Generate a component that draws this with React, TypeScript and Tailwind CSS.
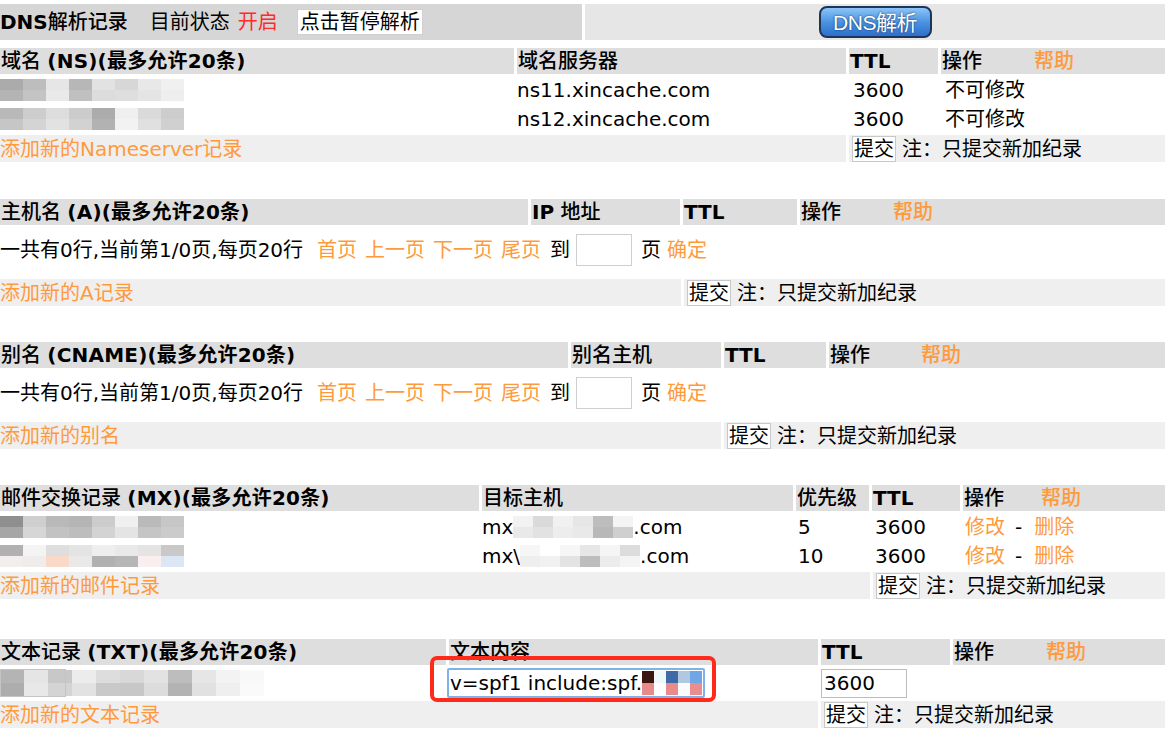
import React from 'react'

const font = "font-['DejaVu_Sans','Noto_Sans_CJK_SC',sans-serif]"

// blurred patches (top half / bottom half colours per column)
const nsBlur1 = [
  ['bg-[#ababab]', 'bg-[#b4b4b4]'],
  ['bg-[#bdbdbd]', 'bg-[#c4c4c4]'],
  ['bg-[#e6e6e6]', 'bg-[#e9e9e9]'],
  ['bg-[#b7b7b7]', 'bg-[#c0c0c0]'],
  ['bg-[#e2e2e2]', 'bg-[#dcdcdc]'],
  ['bg-[#d7d7d7]', 'bg-[#dedede]'],
  ['bg-[#e8e8e8]', 'bg-[#e4e4e4]'],
  ['bg-[#f0f0f0]', 'bg-[#eeeeee]'],
]
const nsBlur2 = [
  ['bg-[#b9b9b9]', 'bg-[#c6c6c6]'],
  ['bg-[#cdcdcd]', 'bg-[#d4d4d4]'],
  ['bg-[#dddddd]', 'bg-[#e2e2e2]'],
  ['bg-[#cccccc]', 'bg-[#d2d2d2]'],
  ['bg-[#acacac]', 'bg-[#b2b2b2]'],
  ['bg-[#efefef]', 'bg-[#f2f2f2]'],
  ['bg-[#dadada]', 'bg-[#e0e0e0]'],
  ['bg-[#cdcdcd]', 'bg-[#d0d0d0]'],
]
const mxBlur1 = [
  ['bg-[#8f8f8f]', 'bg-[#a6a6a6]'],
  ['bg-[#cfcfcf]', 'bg-[#d6d6d6]'],
  ['bg-[#b9b9b9]', 'bg-[#c2c2c2]'],
  ['bg-[#b5b5b5]', 'bg-[#bdbdbd]'],
  ['bg-[#cccccc]', 'bg-[#d3d3d3]'],
  ['bg-[#f0f0f0]', 'bg-[#e4e4e4]'],
  ['bg-[#bababa]', 'bg-[#c5c5c5]'],
  ['bg-[#c7c7c7]', 'bg-[#cbcbcb]'],
]
const mxBlur2 = [
  ['bg-[#b1b1b1]', 'bg-[#f3eeee]'],
  ['bg-[#f4f4f4]', 'bg-[#f1ecec]'],
  ['bg-[#dedede]', 'bg-[#fbd9c8]'],
  ['bg-[#e4e4e4]', 'bg-[#ebe8e8]'],
  ['bg-[#eeeeee]', 'bg-[#b1b1b1]'],
  ['bg-[#e9e9e9]', 'bg-[#b6b6b6]'],
  ['bg-[#e4e4e4]', 'bg-[#fbeeee]'],
  ['bg-[#c9c9c9]', 'bg-[#dde6f4]'],
]
const txtBlur = [
  ['bg-[#b4b4b4]', 'bg-[#adadad]'],
  ['bg-[#e5e5e5]', 'bg-[#e8e8e8]'],
  ['bg-[#c8c8c8]', 'bg-[#d4d4d4]'],
  ['bg-[#ececec]', 'bg-[#e2e2e2]'],
  ['bg-[#dddddd]', 'bg-[#c9c9c9]'],
  ['bg-[#d8d8d8]', 'bg-[#c7c7c7]'],
  ['bg-[#e2e2e2]', 'bg-[#dcdcdc]'],
  ['bg-[#bdbdbd]', 'bg-[#b3b3b3]'],
  ['bg-[#e6e6e6]', 'bg-[#e1e1e1]'],
  ['bg-[#f3f3f3]', 'bg-[#efefef]'],
  ['bg-[#f8f8f8]', 'bg-[#fafafa]'],
]
const mxHost1 = [
  ['bg-[#f2f2f2]', 'bg-[#e9e9e9]'],
  ['bg-[#dadada]', 'bg-[#e2e2e2]'],
  ['bg-[#f1f1f1]', 'bg-[#ededed]'],
  ['bg-[#e6e6e6]', 'bg-[#e9e9e9]'],
  ['bg-[#bdbdbd]', 'bg-[#b8b8b8]'],
  ['bg-[#f4f4f4]', 'bg-[#cfcfcf]'],
]
const mxHost2 = [
  ['bg-[#f6f6f6]', 'bg-[#eeeeee]'],
  ['bg-[#ffffff]', 'bg-[#f1f1f1]'],
  ['bg-[#f6f6f6]', 'bg-[#e3e3e3]'],
  ['bg-[#e6e6e6]', 'bg-[#bdbdbd]'],
  ['bg-[#f5f5f5]', 'bg-[#ececec]'],
  ['bg-[#dcdcdc]', 'bg-[#f4f4f4]'],
]
const spfBlur = [
  ['bg-[#3c1414]', 'bg-[#e98a8a]'],
  ['bg-[#eef8fb]', 'bg-[#ffffff]'],
  ['bg-[#3f6aa6]', 'bg-[#ea8a8a]'],
  ['bg-[#b0c8e0]', 'bg-[#fbfbfb]'],
  ['bg-[#6ea6e6]', 'bg-[#e98d8d]'],
]

function Blur({ cols, w = 'w-[23px]', h = 'h-[22px]' }: { cols: string[][]; w?: string; h?: string }) {
  return (
    <div className={`flex ${h}`}>
      {cols.map((c, i) => (
        <div key={i} className={`flex flex-col ${w}`}>
          <div className={`flex-1 ${c[0]}`} />
          <div className={`flex-1 ${c[1]}`} />
        </div>
      ))}
    </div>
  )
}

function SubmitCell() {
  return (
    <div className="flex items-center gap-[6px] pl-[3px]">
      <span className="bg-white border border-[#c8c8c8] px-[1px] h-[26px] flex items-center leading-none">提交</span>
      <span className="leading-none">注：只提交新加纪录</span>
    </div>
  )
}

function Help({ gap = 'ml-[52px]' }: { gap?: string }) {
  return <span className={`${gap} text-[#ff9a3c] font-medium`}>帮助</span>
}

function Orange({ children }: { children: React.ReactNode }) {
  return <span className="text-[#ff9a3c]">{children}</span>
}

function Pager() {
  return (
    <div className="h-[48px] pb-[4px] flex items-center leading-none">
      <span>一共有0行,当前第1/0页,每页20行</span>
      <span className="ml-[14px] text-[#ff9a3c] flex gap-[8px]">
        <span>首页</span>
        <span>上一页</span>
        <span>下一页</span>
        <span>尾页</span>
      </span>
      <span className="ml-[9px]">到</span>
      <span className="ml-[6px] w-[56px] h-[32px] bg-white border border-[#cfcfcf]" />
      <span className="ml-[9px]">页</span>
      <span className="ml-[6px] text-[#ff9a3c]">确定</span>
    </div>
  )
}

function Title({ first, code }: { first: string; code: string }) {
  return (
    <span className="whitespace-nowrap">
      <span className="font-medium">{first} </span>
      <span className="font-bold tracking-[0.2px]">({code})(最多允许20条)</span>
    </span>
  )
}

const hdr = 'h-[26px] bg-[#dedede] flex items-center pl-[1px] leading-none'
const add = 'h-[27px] bg-[#efefef] flex items-center leading-none'
const row = 'h-[26px] flex items-center leading-none'

export default function App() {
  return (
    <div className={`${font} text-[20px] text-black bg-white w-[1169px] h-[729px] overflow-hidden`}>
      <div className="w-[1165px] pt-[4px]">
        {/* top bar */}
        <div className="flex gap-[3px] h-[36px]">
          <div className="w-[582px] bg-[#d6d6d6] flex items-center leading-none">
            <span className="font-bold">DNS</span>
            <span className="font-medium">解析记录</span>
            <span className="ml-[22px]">目前状态</span>
            <span className="ml-[8px] text-[#ff2a2a]">开启</span>
            <span className="ml-[19px] bg-white border border-[#d0d0d0] h-[26px] px-[2px] flex items-center">点击暂停解析</span>
          </div>
          <div className="flex-1 bg-[#e6e6e6] flex items-center justify-center">
            <span className="h-[32px] w-[113px] rounded-[8px] border-2 border-[#1d3557] bg-gradient-to-b from-[#8cc4f6] via-[#4b93e2] to-[#2d6fcb] flex items-center justify-center text-white text-[21px] tracking-[-0.5px] font-['Liberation_Sans','Noto_Sans_CJK_SC',sans-serif] [text-shadow:0_0_2px_#0b2850] leading-none">
              DNS解析
            </span>
          </div>
        </div>

        {/* NS */}
        <div className="mt-[8px] flex flex-col gap-[3px]">
          <div className="flex gap-[3px]">
            <div className={`${hdr} w-[514px]`}><Title first="域名" code="NS" /></div>
            <div className={`${hdr} w-[329px] font-medium`}>域名服务器</div>
            <div className={`${hdr} w-[89px] font-bold`}>TTL</div>
            <div className={`${hdr} flex-1 font-medium`}>操作<Help /></div>
          </div>
          {[nsBlur1, nsBlur2].map((b, i) => (
            <div key={i} className="flex gap-[3px]">
              <div className={`${row} w-[514px]`}><Blur cols={b} /></div>
              <div className={`${row} w-[329px]`}>ns1{i + 1}.xincache.com</div>
              <div className={`${row} w-[89px] pl-[4px]`}>3600</div>
              <div className={`${row} flex-1 pl-[4px]`}>不可修改</div>
            </div>
          ))}
          <div className="flex gap-[3px]">
            <div className={`${add} w-[846px]`}><Orange>添加新的Nameserver记录</Orange></div>
            <div className={`${add} flex-1`}><SubmitCell /></div>
          </div>
        </div>

        {/* A */}
        <div className="mt-[37px] flex flex-col gap-[3px]">
          <div className="flex gap-[3px]">
            <div className={`${hdr} w-[528px]`}><Title first="主机名" code="A" /></div>
            <div className={`${hdr} w-[149px]`}><span className="font-bold">IP</span><span className="font-medium">&nbsp;地址</span></div>
            <div className={`${hdr} w-[114px] font-bold`}>TTL</div>
            <div className={`${hdr} flex-1 font-medium`}>操作<Help /></div>
          </div>
          <Pager />
          <div className="flex gap-[3px]">
            <div className={`${add} w-[681px]`}><Orange>添加新的A记录</Orange></div>
            <div className={`${add} flex-1`}><SubmitCell /></div>
          </div>
        </div>

        {/* CNAME */}
        <div className="mt-[36px] flex flex-col gap-[3px]">
          <div className="flex gap-[3px]">
            <div className={`${hdr} w-[568px]`}><Title first="别名" code="CNAME" /></div>
            <div className={`${hdr} w-[150px] font-medium`}>别名主机</div>
            <div className={`${hdr} w-[102px] font-bold`}>TTL</div>
            <div className={`${hdr} flex-1 font-medium`}>操作<Help gap="ml-[51px]" /></div>
          </div>
          <Pager />
          <div className="flex gap-[3px]">
            <div className={`${add} w-[721px]`}><Orange>添加新的别名</Orange></div>
            <div className={`${add} flex-1`}><SubmitCell /></div>
          </div>
        </div>

        {/* MX */}
        <div className="mt-[36px] flex flex-col gap-[3px]">
          <div className="flex gap-[3px]">
            <div className={`${hdr} w-[479px]`}><Title first="邮件交换记录" code="MX" /></div>
            <div className={`${hdr} w-[311px] font-medium`}>目标主机</div>
            <div className={`${hdr} w-[73px] font-medium`}>优先级</div>
            <div className={`${hdr} w-[88px] font-bold`}>TTL</div>
            <div className={`${hdr} flex-1 font-medium`}>操作<Help gap="ml-[37px]" /></div>
          </div>
          {[
            { b: mxBlur1, h: mxHost1, p: '5', pre: 'mx' },
            { b: mxBlur2, h: mxHost2, p: '10', pre: 'mx\\' },
          ].map((r, i) => (
            <div key={i} className="flex gap-[3px]">
              <div className={`${row} w-[479px]`}><Blur cols={r.b} /></div>
              <div className={`${row} w-[311px]`}>
                <span>{r.pre}</span>
                <Blur cols={r.h} w="w-[20px]" />
                <span>.com</span>
              </div>
              <div className={`${row} w-[73px] pl-[2px]`}>{r.p}</div>
              <div className={`${row} w-[88px] pl-[3px]`}>3600</div>
              <div className={`${row} flex-1 pl-[2px]`}>
                <Orange>修改</Orange>
                <span className="ml-[10px]">-</span>
                <span className="ml-[12px]"><Orange>删除</Orange></span>
              </div>
            </div>
          ))}
          <div className="flex gap-[3px]">
            <div className={`${add} w-[870px]`}><Orange>添加新的邮件记录</Orange></div>
            <div className={`${add} flex-1`}><SubmitCell /></div>
          </div>
        </div>

        {/* TXT */}
        <div className="mt-[40px] flex flex-col gap-[3px]">
          <div className="flex gap-[3px]">
            <div className={`${hdr} w-[446px]`}><Title first="文本记录" code="TXT" /></div>
            <div className={`${hdr} w-[369px] font-medium`}>文本内容</div>
            <div className={`${hdr} w-[129px] font-bold`}>TTL</div>
            <div className={`${hdr} flex-1 font-medium`}>操作<Help /></div>
          </div>
          <div className="flex gap-[3px]">
            <div className="h-[30px] w-[446px] flex items-center">
              <div className="relative">
                <Blur cols={txtBlur} w="w-[24px]" h="h-[26px]" />
                <div className="absolute left-0 top-[-1px] w-[66px] h-[28px] border border-[#c4c4c4]" />
              </div>
            </div>
            <div className="h-[30px] w-[369px] flex items-center">
              <div className="relative">
                <div className="-ml-[2px] w-[258px] h-[30px] bg-white border-2 border-[#7fb2ea] rounded-[2px] flex items-center pl-[1px] leading-none overflow-hidden">
                  <span>v=spf1 include:spf.</span>
                  <Blur cols={spfBlur} w="w-[12px]" h="h-[24px]" />
                </div>
                <div className="absolute left-[-19px] top-[-12px] w-[286px] h-[46px] border-[4px] border-[#ff2a1a] rounded-[7px]" />
              </div>
            </div>
            <div className="h-[30px] w-[129px] flex items-center">
              <div className="w-[86px] h-[29px] bg-white border border-[#bdbdbd] flex items-center pl-[2px] leading-none">3600</div>
            </div>
            <div className="flex-1" />
          </div>
          <div className="flex gap-[3px]">
            <div className={`${add} w-[818px]`}><Orange>添加新的文本记录</Orange></div>
            <div className={`${add} flex-1`}><SubmitCell /></div>
          </div>
        </div>
      </div>
    </div>
  )
}
